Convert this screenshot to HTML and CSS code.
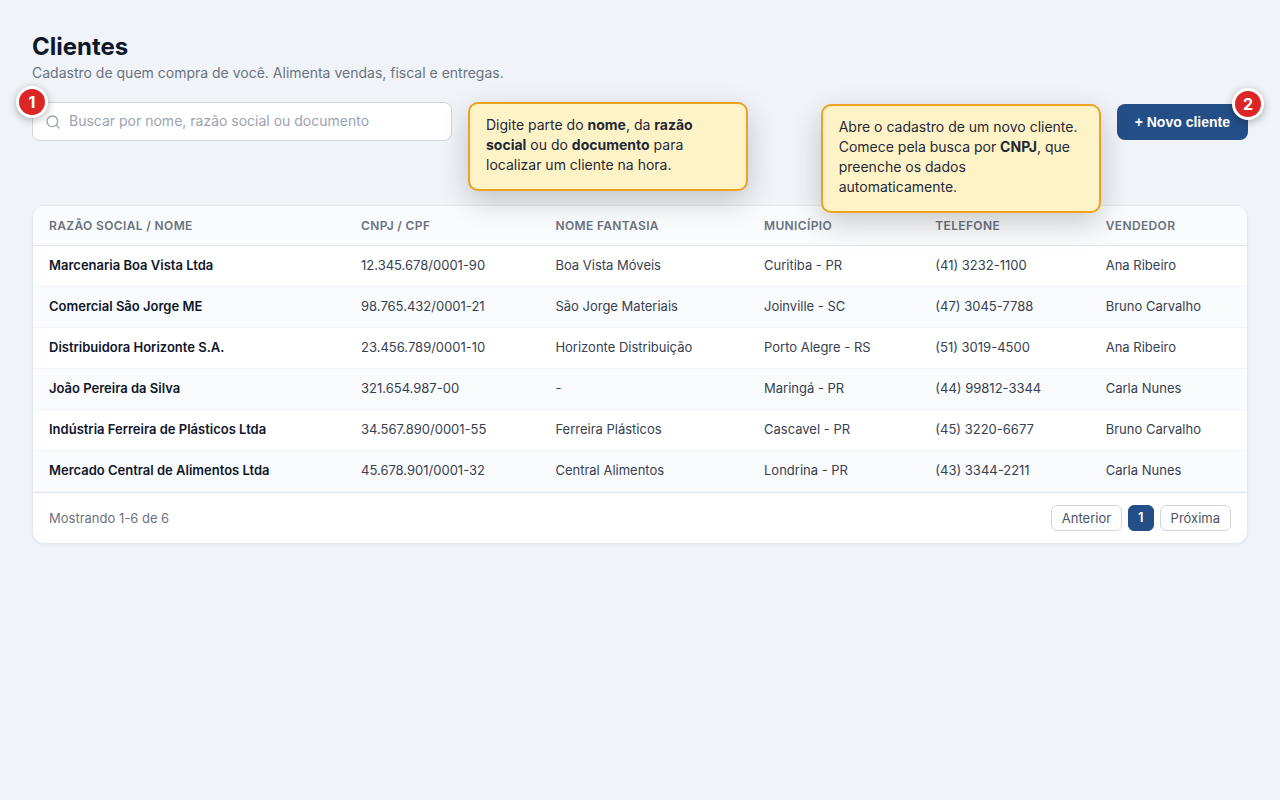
FILE: index.html
```html
<!DOCTYPE html>
<html lang="pt-BR">
<head>
  <meta charset="UTF-8">
  <meta name="viewport" content="width=device-width, initial-scale=1.0">
  <title>Clientes</title>
  <link rel="stylesheet" href="styles.css">
</head>
<body>
  <main class="page">
    <header class="page-header">
      <h1>Clientes</h1>
      <p>Cadastro de quem compra de você. Alimenta vendas, fiscal e entregas.</p>
    </header>

    <div class="toolbar">
      <div class="search">
        <svg class="search-icon" viewBox="0 0 24 24" fill="none" stroke="currentColor" stroke-width="2" stroke-linecap="round" aria-hidden="true">
          <circle cx="11" cy="11" r="8"/>
          <path d="M21 21l-4.3-4.3"/>
        </svg>
        <input type="text" class="search-input" aria-label="Buscar cliente" placeholder="Buscar por nome, razão social ou documento">
        <span class="marker marker-left">1</span>
        <div class="tip tip-right">Digite parte do <b>nome</b>, da <b>razão social</b> ou do <b>documento</b> para localizar um cliente na hora.</div>
      </div>
      <div class="new-client">
        <button type="button" class="btn-primary">+ Novo cliente</button>
        <span class="marker marker-right">2</span>
        <div class="tip tip-left">Abre o cadastro de um novo cliente. Comece pela busca por <b>CNPJ</b>, que preenche os dados automaticamente.</div>
      </div>
    </div>

    <section class="card">
      <table class="clients">
        <thead>
          <tr>
            <th>Razão social / Nome</th>
            <th>CNPJ / CPF</th>
            <th>Nome fantasia</th>
            <th>Município</th>
            <th>Telefone</th>
            <th>Vendedor</th>
          </tr>
        </thead>
        <tbody>
          <tr>
            <td class="name">Marcenaria Boa Vista Ltda</td>
            <td>12.345.678/0001-90</td>
            <td>Boa Vista Móveis</td>
            <td>Curitiba - PR</td>
            <td>(41) 3232-1100</td>
            <td>Ana Ribeiro</td>
          </tr>
          <tr>
            <td class="name">Comercial São Jorge ME</td>
            <td>98.765.432/0001-21</td>
            <td>São Jorge Materiais</td>
            <td>Joinville - SC</td>
            <td>(47) 3045-7788</td>
            <td>Bruno Carvalho</td>
          </tr>
          <tr>
            <td class="name">Distribuidora Horizonte S.A.</td>
            <td>23.456.789/0001-10</td>
            <td>Horizonte Distribuição</td>
            <td>Porto Alegre - RS</td>
            <td>(51) 3019-4500</td>
            <td>Ana Ribeiro</td>
          </tr>
          <tr>
            <td class="name">João Pereira da Silva</td>
            <td>321.654.987-00</td>
            <td>-</td>
            <td>Maringá - PR</td>
            <td>(44) 99812-3344</td>
            <td>Carla Nunes</td>
          </tr>
          <tr>
            <td class="name">Indústria Ferreira de Plásticos Ltda</td>
            <td>34.567.890/0001-55</td>
            <td>Ferreira Plásticos</td>
            <td>Cascavel - PR</td>
            <td>(45) 3220-6677</td>
            <td>Bruno Carvalho</td>
          </tr>
          <tr>
            <td class="name">Mercado Central de Alimentos Ltda</td>
            <td>45.678.901/0001-32</td>
            <td>Central Alimentos</td>
            <td>Londrina - PR</td>
            <td>(43) 3344-2211</td>
            <td>Carla Nunes</td>
          </tr>
        </tbody>
      </table>
      <footer class="card-footer">
        <span>Mostrando 1-6 de 6</span>
        <nav class="pager" aria-label="Paginação">
          <button type="button">Anterior</button>
          <button type="button" class="current" aria-current="page">1</button>
          <button type="button">Próxima</button>
        </nav>
      </footer>
    </section>
  </main>
</body>
</html>
```
FILE: styles.css
```css
* {
  box-sizing: border-box;
}
body {
  margin: 0;
  font-family: Inter, sans-serif;
  font-size: 14px;
  background: #f0f4f8;
  color: #374151;
}
.page {
  padding: 32px;
}
h1 {
  margin: 0;
  font-size: 24px;
  line-height: 30px;
  font-weight: 700;
  color: #0f172a;
}
.page-header p {
  margin: 2px 0 0;
  line-height: 18px;
  color: #6b7280;
}

/* Toolbar */
.toolbar {
  display: flex;
  justify-content: space-between;
  align-items: center;
  margin: 20px 0 64px;
}
.search {
  position: relative;
  width: 420px;
}
.search-icon {
  position: absolute;
  left: 13px;
  top: 12px;
  width: 16px;
  height: 16px;
  color: #9ca3af;
}
.search-input {
  display: block;
  width: 100%;
  padding: 9px 12px 11px 36px;
  font-family: inherit;
  font-size: 14px;
  line-height: 17px;
  color: #374151;
  background: #fff;
  border: 1px solid #d1d5db;
  border-radius: 8px;
}
.search-input::placeholder {
  color: #9ca3af;
}
.new-client {
  position: relative;
}
.btn-primary {
  display: block;
  padding: 10px 18px;
  font-family: "Liberation Sans", Arial, sans-serif;
  font-size: 14px;
  font-weight: 600;
  line-height: 16px;
  color: #fff;
  background: #234e87;
  border: none;
  border-radius: 8px;
  cursor: pointer;
}

/* Numbered markers and their tips */
.marker {
  position: absolute;
  top: -16px;
  z-index: 2;
  width: 32px;
  height: 32px;
  border: 3px solid #fff;
  border-radius: 50%;
  background: #dc2626;
  color: #fff;
  font-size: 16px;
  font-weight: 700;
  line-height: 26px;
  text-align: center;
  box-shadow: 0 2px 8px rgba(0, 0, 0, 0.3);
}
.marker-left {
  left: -16px;
}
.marker-right {
  right: -16px;
}
.tip {
  position: absolute;
  top: 0;
  z-index: 1;
  width: 280px;
  padding: 11px 16px 14px;
  border: 2px solid #f0a020;
  border-radius: 10px;
  background: #fef3c7;
  color: #1f2937;
  font-size: 14px;
  line-height: 20px;
  box-shadow: 0 10px 30px rgba(0, 0, 0, 0.2);
}
.tip-right {
  left: calc(100% + 16px);
}
.tip-left {
  right: calc(100% + 16px);
}

/* Table */
.card {
  background: #fff;
  border: 1px solid #e2e8f0;
  border-radius: 12px;
  overflow: hidden;
  box-shadow: 0 1px 3px rgba(0, 0, 0, 0.05);
}
.clients {
  width: 100%;
  border-collapse: collapse;
}
.clients th {
  padding: 12px 16px;
  font-size: 12px;
  font-weight: 600;
  line-height: 15px;
  letter-spacing: 0.03em;
  text-align: left;
  text-transform: uppercase;
  color: #6b7280;
  background: #f9fbfd;
  border-bottom: 1px solid #e2e8f0;
}
.clients td {
  padding: 11px 16px 13px;
  font-size: 13px;
  line-height: 16px;
  border-bottom: 1px solid #f1f5f9;
}
.clients tr:nth-child(even) td {
  background: #f9fbfd;
}
.clients .name {
  font-weight: 600;
  color: #0f172a;
}
.card-footer {
  display: flex;
  justify-content: space-between;
  align-items: center;
  padding: 12px 16px;
  border-top: 1px solid #e2e8f0;
  font-size: 13px;
  color: #6b7280;
}
.pager {
  display: flex;
  gap: 6px;
}
.pager button {
  padding: 4px 10px;
  font-family: inherit;
  font-size: 13px;
  line-height: 16px;
  color: #4b5563;
  background: #fff;
  border: 1px solid #d1d5db;
  border-radius: 6px;
  cursor: pointer;
}
.pager .current {
  padding: 3px 9px 5px;
  font-weight: 600;
  color: #fff;
  background: #234e87;
  border-color: #234e87;
}
```
